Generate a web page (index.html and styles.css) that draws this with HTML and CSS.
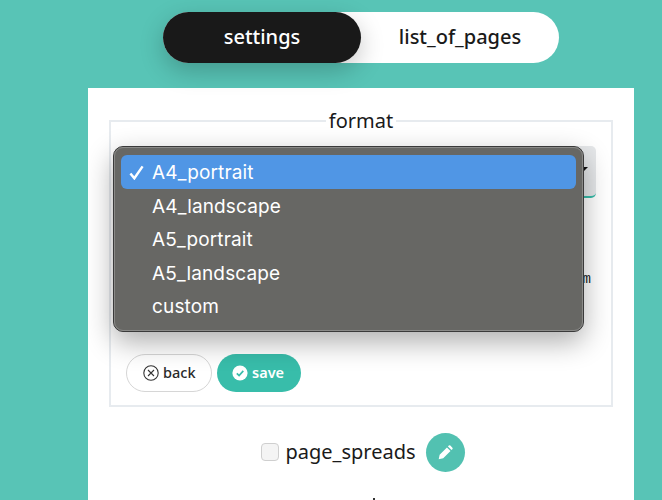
FILE: index.html
```html
<!DOCTYPE html>
<html lang="en">
<head>
<meta charset="utf-8">
<title>settings</title>
<link rel="stylesheet" href="styles.css">
</head>
<body>
<main class="page">
  <nav class="tabs">
    <span class="tab tab-active">settings</span>
    <span class="tab">list_of_pages</span>
  </nav>
  <section class="card">
    <fieldset class="group">
      <legend class="group-title">format</legend>
      <div class="select-box"><span class="select-arrow"></span></div>
      <div class="hidden-row"><span class="unit">m</span></div>
      <div class="actions">
        <button class="btn btn-back">
          <svg class="btn-icon" viewBox="0 0 16 16"><circle cx="8" cy="8" r="7.2" fill="none" stroke="#333" stroke-width="1.1"/><path d="M5 5l6 6M11 5l-6 6" stroke="#333" stroke-width="1.1" fill="none"/></svg>
          <span class="btn-text">back</span>
        </button>
        <button class="btn btn-save">
          <svg class="btn-icon" viewBox="0 0 16 16"><circle cx="8" cy="8" r="7.6" fill="#fff"/><path d="M4.8 8.3l2.3 2.2 4.2-4.6" stroke="#38bdaa" stroke-width="1.7" fill="none"/></svg>
          <span class="btn-text">save</span>
        </button>
      </div>
      <div class="menu">
        <div class="menu-item menu-item-selected">
          <svg class="menu-check" viewBox="0 0 16 16"><path d="M1.5 9l4.2 5.2L14.5 1.5" stroke="#fff" stroke-width="2.6" fill="none"/></svg>
          A4_portrait
        </div>
        <div class="menu-item">A4_landscape</div>
        <div class="menu-item">A5_portrait</div>
        <div class="menu-item">A5_landscape</div>
        <div class="menu-item">custom</div>
      </div>
    </fieldset>
    <div class="spreads">
      <span class="checkbox"></span>
      <span class="spreads-label">page_spreads</span>
      <button class="round-btn">
        <svg viewBox="0 0 20 20" class="round-icon"><path d="M12.9 2.9l1-1a1.3 1.3 0 0 1 1.8 0l2.4 2.4a1.3 1.3 0 0 1 0 1.8l-1 1zM11.7 4.1l4.2 4.2-8.6 8.6-5.3 1.1 1.1-5.3z" fill="#fff"/></svg>
      </button>
    </div>
    <div class="next-mark"></div>
  </section>
</main>
</body>
</html>
```
FILE: styles.css
```css
* { box-sizing: border-box; }
html, body { margin: 0; height: 500px; overflow: hidden; }
body { background: #58c4b6; font-family: "Noto Sans", "Open Sans", sans-serif; color: #1a1a1a; }
.page { width: 546px; margin-left: 88px; display: flex; flex-direction: column; }

.tabs { position: relative; z-index: 1; width: 396px; height: 51px; margin: 12px auto 25px; display: flex; background: #fff; border-radius: 26px; }
.tab { flex: 1; display: flex; align-items: center; justify-content: center; border-radius: 26px; font-size: 20px; font-weight: 500; padding-bottom: 2px; }
.tab-active { background: #191919; color: #fff; box-shadow: 0 8px 24px rgba(0, 0, 0, .22); }

.card { background: #fff; height: 420px; padding: 21px 21px 0; overflow: hidden; }
.group { position: relative; margin: 0; padding: 13px 15px 0; height: 298px; border: 2px solid #e7ebef; min-width: 0; }
.group-title { margin: 0 auto; padding: 0 3px; font-size: 20px; line-height: 24px; }

.select-box { position: relative; width: 470px; height: 52px; background: #e6e8ea; border-bottom: 2px solid #38bdaa; border-radius: 0 5px 5px 5px; }
.select-arrow { position: absolute; right: 8px; top: 21px; border: 4px solid transparent; border-top-color: #111; }
.hidden-row { height: 156px; display: flex; justify-content: flex-end; align-items: flex-start; padding: 71px 11px 0 0; margin-right: -6px; }
.unit { font-size: 14px; line-height: 20px; color: #222; font-family: "Liberation Mono", monospace; }

.actions { display: flex; gap: 5px; }
.btn { height: 38px; display: flex; align-items: center; gap: 4px; border-radius: 19px; font: 500 14.5px "Noto Sans", sans-serif; }
.btn-text { position: relative; bottom: 1px; }
.btn-icon { width: 16px; height: 16px; }
.btn-back { width: 86px; padding: 0 0 0 16px; background: #fff; color: #2a2a2a; border: 1px solid #d6d6d6; }
.btn-save { width: 84px; padding: 0 0 0 15px; background: #38bdaa; color: #fff; border: 0; font-weight: 600; }

.menu { position: absolute; left: 2px; top: 13px; width: 471px; height: 186px; padding: 8px 7px; background: #676764; border: 1px solid #3a3a3a; outline: 1px solid #8a8a88; outline-offset: -2px; border-radius: 10px; box-shadow: 0 10px 28px rgba(0, 0, 0, .32); color: #fff; font-family: Inter, sans-serif; font-size: 19px; letter-spacing: .15px; }
.menu-item { position: relative; height: 33.5px; padding: 2px 0 0 31px; display: flex; align-items: center; }
.menu-item-selected { background: #5096e5; border-radius: 6px; }
.menu-check { position: absolute; left: 8px; top: 10px; width: 15px; height: 15px; }

.spreads { height: 38px; margin-top: 26px; padding-left: 4px; display: flex; justify-content: center; align-items: center; }
.checkbox { width: 18px; height: 18px; margin-right: 6px; background: #f4f4f4; border: 1px solid #cfcfcf; border-radius: 4px; }
.spreads-label { font-size: 20px; padding-bottom: 2px; }
.round-btn { width: 39px; height: 39px; margin-left: 10px; padding: 0; display: flex; align-items: center; justify-content: center; background: #52c1b1; border: 0; border-radius: 50%; }
.round-icon { width: 17px; height: 17px; }
.next-mark { width: 2px; height: 2px; margin: 27px 0 0 264px; background: #333; }
```
